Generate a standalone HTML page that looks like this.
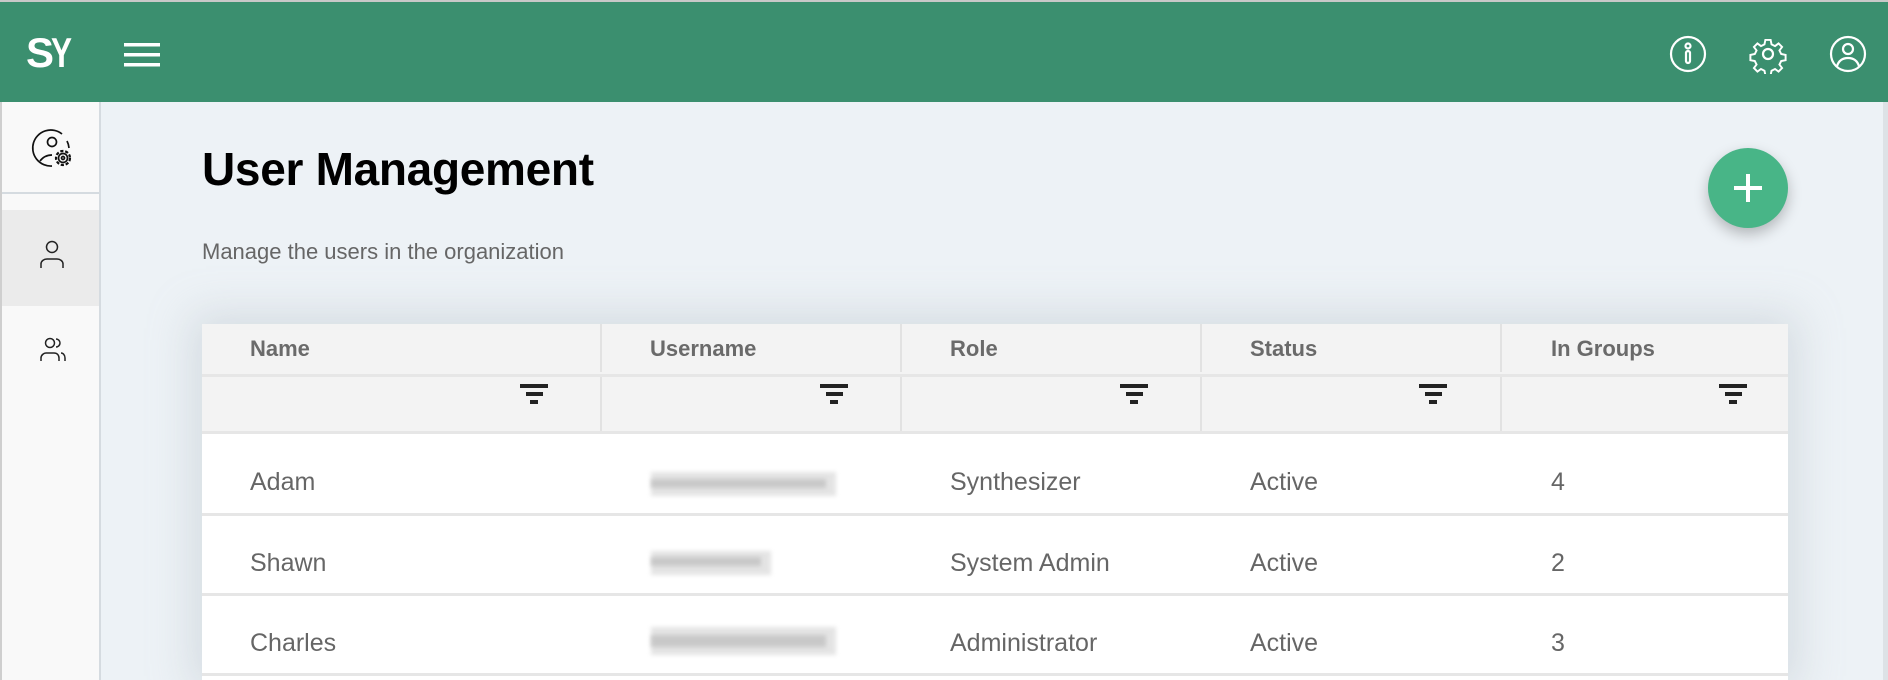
<!DOCTYPE html>
<html><head><meta charset="utf-8"><style>
*{margin:0;padding:0;box-sizing:border-box}
body{width:1888px;height:680px;overflow:hidden;background:#edf2f6;font-family:"Liberation Sans",sans-serif;position:relative}
.top{position:absolute;left:0;top:0;width:1888px;height:2px;background:#c8c8c8}
.hdr{position:absolute;left:0;top:2px;width:1888px;height:100px;background:#3b8f6f}
.side{position:absolute;left:0;top:102px;width:101px;height:578px;background:#f9f9f9;border-right:2px solid #d5dbe0;border-left:2px solid #cfcfcf}
.abs{position:absolute}
.title{position:absolute;left:202px;top:142px;font-size:46px;font-weight:bold;color:#000;letter-spacing:-0.3px}
.sub{position:absolute;left:202px;top:239px;font-size:22px;color:#666}
.table{position:absolute;left:202px;top:324px;width:1586px;height:356px;background:#fff;box-shadow:0 0 40px 10px rgba(170,180,190,0.35)}
.hrow{position:absolute;left:0;width:1586px;background:#f3f3f3}
.cell{position:absolute;font-size:25px;color:#666}
.hcell{position:absolute;font-size:22px;font-weight:bold;color:#6a6a6a;top:12px}
.vl{position:absolute;width:2px;background:#e2e2e2}
.hl{position:absolute;left:0;width:1586px;height:3px;background:#e6e6e6}
.blur{position:absolute;background:#c4c4c4;filter:blur(2px);opacity:.85}
.fab{position:absolute;left:1708px;top:148px;width:80px;height:80px;border-radius:50%;background:#48b587;box-shadow:0 6px 14px rgba(0,0,0,0.25)}
</style></head><body>
<div class="top"></div>
<div class="hdr">
  <div class="abs" style="left:26px;top:27px;color:#fff;font-size:42px;font-weight:bold;letter-spacing:-3px">S<span style="display:inline-block;transform:scaleX(0.75);transform-origin:left">Y</span></div>
  <svg class="abs" style="left:124px;top:39px" width="36" height="28"><rect y="2" width="36" height="3.5" fill="#fff"/><rect y="12" width="36" height="3.5" fill="#fff"/><rect y="22" width="36" height="3.5" fill="#fff"/></svg>
  <svg class="abs" style="left:1668px;top:32px" width="40" height="40" fill="none" stroke="#fff" stroke-width="2.2"><circle cx="20" cy="20" r="17"/><circle cx="20" cy="12" r="2.5"/><rect x="18" y="17" width="4" height="12" rx="2"/></svg>
  <svg class="abs" style="left:1748px;top:32px" width="40" height="40" fill="none" stroke="#fff" stroke-width="2.2"><path d="M17 4h6l1 5 4 2 4-3 4 4-3 4 2 4 5 1v6l-5 1-2 4 3 4-4 4-4-3-4 2-1 5h-6l-1-5-4-2-4 3-4-4 3-4-2-4-5-1v-6l5-1 2-4-3-4 4-4 4 3 4-2z" transform="translate(20 20) scale(0.88) translate(-20 -20)"/><circle cx="20" cy="20" r="5"/></svg>
  <svg class="abs" style="left:1828px;top:32px" width="40" height="40" fill="none" stroke="#fff" stroke-width="2.2"><circle cx="20" cy="20" r="17"/><circle cx="20" cy="15" r="5"/><path d="M9 32c2-6 6-8 11-8s9 2 11 8"/></svg>
</div>
<div class="side">
  <svg class="abs" style="left:28px;top:24px" width="48" height="48" fill="none" stroke="#111" stroke-width="1.7"><path d="M32 8A18 18 0 1 0 22 40"/><path d="M37 15A18 18 0 0 1 39 22"/><circle cx="22" cy="16" r="4.5"/><path d="M10 35c3-4 7-6 12-6"/><circle cx="33" cy="32" r="7" stroke-dasharray="3.2 1.8" stroke-width="2.2"/><circle cx="33" cy="32" r="4.5"/><circle cx="33" cy="32" r="1.5"/></svg>
  <div class="abs" style="left:0;top:90px;width:97px;height:2px;background:#d5dbe0"></div>
  <div class="abs" style="left:0;top:108px;width:97px;height:96px;background:#ebebeb"></div>
  <svg class="abs" style="left:36px;top:138px" width="28" height="30" fill="none" stroke="#222" stroke-width="1.5"><circle cx="14" cy="7" r="5.5"/><path d="M3 28v-4c0-3 3-5 6-5h10c3 0 6 2 6 5v4"/></svg>
  <svg class="abs" style="left:37px;top:233px" width="28" height="28" fill="none" stroke="#222" stroke-width="1.5"><circle cx="11" cy="8" r="4.5"/><path d="M17 4a4 4 0 0 1 0 8"/><path d="M2 26v-3c0-3 3-5 5-5h8c3 0 5 2 5 5v3"/><path d="M22 18c2 0 4 2 4 5v3"/></svg>
</div>
<div class="title">User Management</div>
<div class="sub">Manage the users in the organization</div>
<div class="fab"><div class="abs" style="left:26px;top:38px;width:28px;height:4px;background:#fff"></div><div class="abs" style="left:38px;top:26px;width:4px;height:28px;background:#fff"></div></div>
<div class="table">
  <div class="hrow" style="top:0;height:108px"></div>
  <div class="hl" style="top:50px;height:3px"></div>
  <div class="hl" style="top:107px"></div>
  <div class="hl" style="top:189px"></div>
  <div class="hl" style="top:269px"></div>
  <div class="hl" style="top:349px"></div>
  <div class="vl" style="left:398px;top:0;height:48px"></div><div class="vl" style="left:398px;top:53px;height:54px"></div>
  <div class="vl" style="left:698px;top:0;height:48px"></div><div class="vl" style="left:698px;top:53px;height:54px"></div>
  <div class="vl" style="left:998px;top:0;height:48px"></div><div class="vl" style="left:998px;top:53px;height:54px"></div>
  <div class="vl" style="left:1298px;top:0;height:48px"></div><div class="vl" style="left:1298px;top:53px;height:54px"></div>
  <div class="hcell" style="left:48px">Name</div>
  <div class="hcell" style="left:448px">Username</div>
  <div class="hcell" style="left:748px">Role</div>
  <div class="hcell" style="left:1048px">Status</div>
  <div class="hcell" style="left:1349px">In Groups</div>
  <svg class="abs" style="left:317px;top:60px" width="30" height="22"><rect x="1" width="28" height="4" fill="#222"/><rect x="7" y="8" width="17" height="4" fill="#222"/><rect x="11" y="16" width="8" height="4" fill="#222"/></svg>
  <svg class="abs" style="left:617px;top:60px" width="30" height="22"><rect x="1" width="28" height="4" fill="#222"/><rect x="7" y="8" width="17" height="4" fill="#222"/><rect x="11" y="16" width="8" height="4" fill="#222"/></svg>
  <svg class="abs" style="left:917px;top:60px" width="30" height="22"><rect x="1" width="28" height="4" fill="#222"/><rect x="7" y="8" width="17" height="4" fill="#222"/><rect x="11" y="16" width="8" height="4" fill="#222"/></svg>
  <svg class="abs" style="left:1216px;top:60px" width="30" height="22"><rect x="1" width="28" height="4" fill="#222"/><rect x="7" y="8" width="17" height="4" fill="#222"/><rect x="11" y="16" width="8" height="4" fill="#222"/></svg>
  <svg class="abs" style="left:1516px;top:60px" width="30" height="22"><rect x="1" width="28" height="4" fill="#222"/><rect x="7" y="8" width="17" height="4" fill="#222"/><rect x="11" y="16" width="8" height="4" fill="#222"/></svg>

  <div class="cell" style="left:48px;top:144px">Adam</div>
  <div class="blur" style="left:449px;top:148px;width:185px;height:24px;opacity:.45"></div>
  <div class="blur" style="left:449px;top:155px;width:175px;height:9px"></div>
  <div class="cell" style="left:748px;top:144px">Synthesizer</div>
  <div class="cell" style="left:1048px;top:144px">Active</div>
  <div class="cell" style="left:1349px;top:144px">4</div>

  <div class="cell" style="left:48px;top:225px">Shawn</div>
  <div class="blur" style="left:449px;top:227px;width:120px;height:24px;opacity:.45"></div>
  <div class="blur" style="left:449px;top:233px;width:110px;height:9px"></div>
  <div class="cell" style="left:748px;top:225px">System Admin</div>
  <div class="cell" style="left:1048px;top:225px">Active</div>
  <div class="cell" style="left:1349px;top:225px">2</div>

  <div class="cell" style="left:48px;top:305px">Charles</div>
  <div class="blur" style="left:449px;top:303px;width:185px;height:28px;opacity:.45"></div>
  <div class="blur" style="left:449px;top:311px;width:175px;height:12px"></div>
  <div class="cell" style="left:748px;top:305px">Administrator</div>
  <div class="cell" style="left:1048px;top:305px">Active</div>
  <div class="cell" style="left:1349px;top:305px">3</div>
</div>
<div class="abs" style="left:1883px;top:102px;width:5px;height:578px;background:#dde2e6"></div>
</body></html>
